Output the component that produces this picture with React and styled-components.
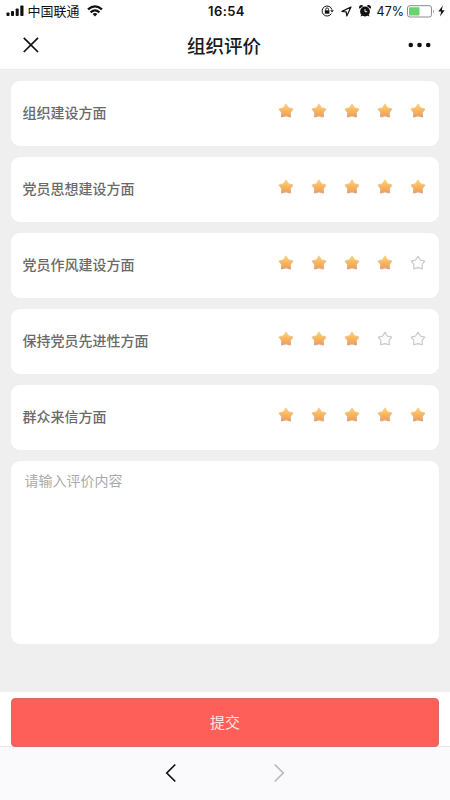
import { useState } from "react";
import styled, { createGlobalStyle } from "styled-components";

const GlobalStyle = createGlobalStyle`
* {
  box-sizing: border-box;
}
body {
  margin: 0;
  background: #efefef;
  font-family: "Liberation Sans", "Noto Sans CJK SC", sans-serif;
}
svg {
  display: block;
  flex: none;
}
`;

const Page = styled.div`
display: flex;
flex-direction: column;
width: 100%;
height: 100vh;
overflow: hidden;
`;

const StatusBar = styled.div`
display: grid;
grid-template-columns: 1fr auto 1fr;
align-items: center;
height: 22px;
padding: 0 5px 0 6px;
background: #fff;
color: #111;
`;

const StatusGroup = styled.div`
display: flex;
align-items: center;
gap: ${({ $gap }) => $gap}px;
justify-content: ${({ $end }) => ($end ? "flex-end" : "flex-start")};
`;

const Carrier = styled.span`
font-family: "Noto Sans CJK SC", sans-serif;
font-size: 13px;
line-height: 20px;
`;

const Time = styled.span`
padding-left: 2px;
font-family: Inter, sans-serif;
font-size: 13px;
font-weight: 600;
letter-spacing: 0.4px;
line-height: 20px;
`;

const Percent = styled.span`
font-family: Inter, sans-serif;
font-size: 12.5px;
line-height: 20px;
margin: 1px -4px 0 -1px;
`;

const TitleBar = styled.header`
display: grid;
grid-template-columns: 1fr auto 1fr;
align-items: center;
height: 48px;
padding: 0 19px 1px 22px;
background: #fff;
border-bottom: 1px solid #ececec;
`;

const Title = styled.h1`
margin: 0 5px 1px 0;
font-family: "Noto Sans CJK SC", sans-serif;
font-size: 18.5px;
font-weight: 500;
line-height: 26px;
color: #1a1a1a;
`;

const IconButton = styled.button`
display: flex;
padding: 0;
border: 0;
background: none;
color: ${({ $muted }) => ($muted ? "#b9b9bb" : "#111")};
justify-self: ${({ $end }) => ($end ? "end" : "start")};
`;

const Content = styled.main`
display: flex;
flex: 1;
flex-direction: column;
gap: 11px;
padding: 10.5px 11px 0;
`;

const Card = styled.section`
display: flex;
align-items: center;
justify-content: space-between;
height: 65px;
padding: 0 13px 0 11.5px;
border-radius: 9px;
background: #fff;
`;

const Label = styled.span`
margin-bottom: 2px;
font-family: "Noto Sans CJK SC", sans-serif;
font-size: 14px;
font-weight: 500;
line-height: 20px;
color: #6a6a6a;
`;

const Stars = styled.div`
display: flex;
gap: 17px;
margin-bottom: 4px;
`;

const StarButton = styled.button`
width: 16px;
height: 16px;
padding: 0;
border: 0;
background: none;
`;

const Comment = styled.textarea`
display: block;
height: 183px;
padding: 8px 13.5px;
border: 0;
border-radius: 9px;
outline: none;
resize: none;
background: #fff;
font-family: "Noto Sans CJK SC", sans-serif;
font-size: 14px;
line-height: 22px;
color: #666;
&::placeholder {
  color: #aaa;
  opacity: 1;
}
`;

const SubmitBar = styled.div`
z-index: 1;
height: 54px;
padding: 6px 11px 0;
background: #fff;
`;

const SubmitButton = styled.button`
position: relative;
display: block;
width: 100%;
height: 49px;
padding: 0 0 2px;
border: 1px solid #dc6968;
border-radius: 4px;
background: #fe5f58;
font-family: "Noto Sans CJK SC", sans-serif;
font-size: 15px;
line-height: 20px;
color: #ffe6e3;
`;

const BrowserNav = styled.nav`
display: flex;
justify-content: center;
gap: 96px;
height: 54px;
padding-top: 16px;
border-top: 1px solid #e6e6ea;
background: #fafafc;
`;

const items = [
  { label: "组织建设方面", score: 5 },
  { label: "党员思想建设方面", score: 5 },
  { label: "党员作风建设方面", score: 4 },
  { label: "保持党员先进性方面", score: 3 },
  { label: "群众来信方面", score: 5 },
];

const STAR =
  "M8 1.2 L10.4 5 L14.7 6.1 L12.1 9.5 L12.3 13.8 L8 12.6 L3.7 13.8 L3.9 9.5 L1.3 6.1 L5.6 5 Z";

function Star({ on }) {
  return (
    <svg width="16" height="16" viewBox="0 0 16 16">
      <path
        d={STAR}
        fill={on ? "url(#gold)" : "#fcfcfc"}
        stroke={on ? "url(#goldEdge)" : "#c6c6c6"}
        strokeWidth={on ? 1.3 : 1.1}
        strokeLinejoin="round"
      />
    </svg>
  );
}

// gradients shared by every filled star
function StarGradients() {
  return (
    <svg width="0" height="0" style={{ position: "absolute" }}>
      <defs>
        <linearGradient id="gold" x1="0" y1="0" x2="0" y2="1">
          <stop offset="0" stopColor="#ffd269" />
          <stop offset="1" stopColor="#f39a50" />
        </linearGradient>
        <linearGradient id="goldEdge" x1="0" y1="0" x2="0" y2="1">
          <stop offset="0" stopColor="#fbd387" />
          <stop offset="1" stopColor="#dda27c" />
        </linearGradient>
      </defs>
    </svg>
  );
}

function Signal() {
  return (
    <svg width="18" height="12" viewBox="0 0 18 12" fill="currentColor">
      <rect x="0.5" y="7.5" width="3" height="3.5" rx="0.8" />
      <rect x="5" y="6" width="3" height="5" rx="0.8" />
      <rect x="9.7" y="3.5" width="3" height="7.5" rx="0.8" />
      <rect x="14.3" y="0.5" width="3.2" height="10.5" rx="0.8" />
    </svg>
  );
}

function Wifi() {
  return (
    <svg width="16" height="12" viewBox="0 0 16 12" fill="none" stroke="currentColor" strokeWidth="2.2">
      <path d="M1 4.4 Q8 -1.8 15 4.4" />
      <path d="M3.6 7.4 Q8 3.5 12.4 7.4" />
      <path d="M8 11.4 L5.6 9 Q8 7 10.4 9 Z" fill="currentColor" stroke="none" />
    </svg>
  );
}

function RotationLock() {
  return (
    <svg width="13" height="12" viewBox="0 0 13 12" fill="none" stroke="currentColor">
      <path d="M10.9 4.6 A5 5 0 1 0 10.4 8.6" />
      <path d="M9.2 5.2 H12.8 L11 7.6 Z" fill="currentColor" stroke="none" />
      <rect x="3.8" y="5.3" width="4.6" height="3.4" fill="currentColor" stroke="none" />
      <path d="M4.7 5.5 V4.3 A1.4 1.4 0 0 1 7.5 4.3 V5.5" strokeWidth="0.9" />
    </svg>
  );
}

function LocationArrow() {
  return (
    <svg width="11" height="11" viewBox="0 0 11 11" fill="none" stroke="currentColor" strokeWidth="1.2">
      <path d="M10 1 L1 5.4 L5.2 5.8 L5.8 10 Z" strokeLinejoin="round" />
    </svg>
  );
}

function Alarm() {
  return (
    <svg width="12" height="12" viewBox="0 0 12 12" fill="currentColor">
      <circle cx="6" cy="6.5" r="4.9" />
      <path d="M0.6 3.8 A2 2 0 0 1 4.2 1 Z M11.4 3.8 A2 2 0 0 0 7.8 1 Z M2.2 9.5 L1.5 11.6 L4 10.6 Z M9.8 9.5 L10.5 11.6 L8 10.6 Z" />
      <path d="M6 4 V6.7 H8.2" fill="none" stroke="#fff" strokeWidth="0.9" />
    </svg>
  );
}

function Battery() {
  return (
    <svg width="29" height="13" viewBox="0 0 29 13">
      <rect x="0.5" y="0.7" width="24" height="11.3" rx="2.3" fill="#fff" stroke="#8c8c8c" />
      <rect x="2" y="2.2" width="10.5" height="8.3" rx="0.8" fill="#68d36f" />
      <path d="M26 4.4 Q28 6.4 26 8.4 Z" fill="#999" />
    </svg>
  );
}

function Bolt() {
  return (
    <svg width="7" height="12" viewBox="0 0 7 12" fill="currentColor">
      <path d="M4.8 0.5 L0.4 6.6 H3.2 L2 11.5 L6.6 5.2 H3.8 Z" />
    </svg>
  );
}

function Rating({ label, score, onChange }) {
  return (
    <Card>
      <Label>{label}</Label>
      <Stars>
        {[1, 2, 3, 4, 5].map((n) => (
          <StarButton key={n} aria-label={`${n}`} onClick={() => onChange(n)}>
            <Star on={n <= score} />
          </StarButton>
        ))}
      </Stars>
    </Card>
  );
}

export default function App() {
  const [scores, setScores] = useState(items.map((item) => item.score));

  const rate = (index, value) =>
    setScores(scores.map((score, i) => (i === index ? value : score)));

  return (
    <Page>
      <GlobalStyle />
      <StarGradients />
      <StatusBar>
        <StatusGroup $gap={3.5}>
          <Signal />
          <Carrier>中国联通</Carrier>
          <span />
          <Wifi />
        </StatusGroup>
        <Time>16:54</Time>
        <StatusGroup $gap={7} $end>
          <RotationLock />
          <LocationArrow />
          <Alarm />
          <Percent>47%</Percent>
          <StatusGroup $gap={2}>
            <Battery />
            <Bolt />
          </StatusGroup>
        </StatusGroup>
      </StatusBar>
      <TitleBar>
        <IconButton aria-label="关闭">
          <svg width="18" height="18" viewBox="0 0 18 18" stroke="currentColor" strokeWidth="1.7">
            <path d="M1.8 1.8 L16 16 M16 1.8 L1.8 16" />
          </svg>
        </IconButton>
        <Title>组织评价</Title>
        <IconButton $end aria-label="更多">
          <svg width="23" height="6" viewBox="0 0 23 6" fill="currentColor">
            <circle cx="2.8" cy="3" r="2.3" />
            <circle cx="11.5" cy="3" r="2.3" />
            <circle cx="20.2" cy="3" r="2.3" />
          </svg>
        </IconButton>
      </TitleBar>
      <Content>
        {items.map((item, i) => (
          <Rating
            key={item.label}
            label={item.label}
            score={scores[i]}
            onChange={(value) => rate(i, value)}
          />
        ))}
        <Comment placeholder="请输入评价内容" />
      </Content>
      <SubmitBar>
        <SubmitButton>提交</SubmitButton>
      </SubmitBar>
      <BrowserNav>
        <IconButton aria-label="后退">
          <svg width="12" height="20" viewBox="0 0 12 20" fill="none" stroke="currentColor" strokeWidth="1.7">
            <path d="M10.3 1.5 L1.8 10 L10.3 18.5" />
          </svg>
        </IconButton>
        <IconButton $muted aria-label="前进">
          <svg width="12" height="20" viewBox="0 0 12 20" fill="none" stroke="currentColor" strokeWidth="1.7">
            <path d="M1.7 1.5 L10.2 10 L1.7 18.5" />
          </svg>
        </IconButton>
      </BrowserNav>
    </Page>
  );
}
